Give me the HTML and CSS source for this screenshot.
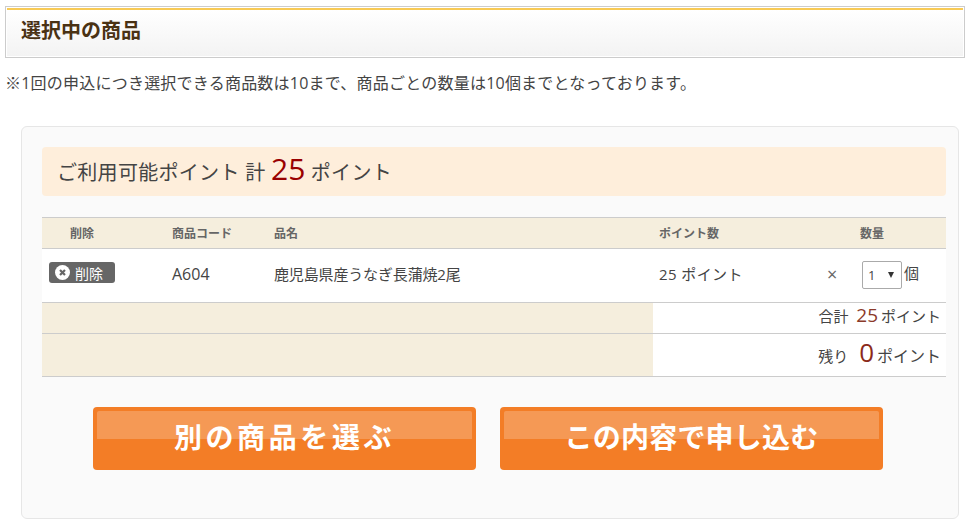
FILE: index.html
```html
<!DOCTYPE html>
<html lang="ja">
<head>
    <meta charset="UTF-8">
    <title>選択中の商品</title>
    <link rel="stylesheet" href="styles.css">
</head>
<body>
    <h2 class="heading"><span>選択中の商品</span></h2>
    <p class="note">※1回の申込につき選択できる商品数は10まで、商品ごとの数量は10個までとなっております。</p>

    <div class="panel">
        <div class="available">ご利用可能ポイント 計 <em>25</em> ポイント</div>

        <table class="items">
            <thead>
                <tr>
                    <th class="col-del">削除</th>
                    <th class="col-code">商品コード</th>
                    <th class="col-name">品名</th>
                    <th class="col-point">ポイント数</th>
                    <th class="col-times"></th>
                    <th class="col-qty">数量</th>
                </tr>
            </thead>
            <tbody>
                <tr class="item">
                    <td>
                        <a class="del-btn" href="#">
                            <svg width="15" height="15" viewBox="0 0 15 15">
                                <circle cx="7.5" cy="7.5" r="7.5" fill="#fff"/>
                                <path d="M5 5l5 5M10 5l-5 5" stroke="#666" stroke-width="2.2"/>
                            </svg>
                            削除
                        </a>
                    </td>
                    <td class="code-cell">A604</td>
                    <td class="name-cell">鹿児島県産うなぎ長蒲焼2尾</td>
                    <td class="point-cell">25 ポイント</td>
                    <td class="times-cell">×</td>
                    <td class="qty-cell">
                        <span class="qty-select">1<i></i></span><span class="qty-unit">個</span>
                    </td>
                </tr>
                <tr class="sum">
                    <td colspan="3" class="blank"></td>
                    <td colspan="3" class="sum-cell">合計 <b class="sum-num">25</b> ポイント</td>
                </tr>
                <tr class="sum rest">
                    <td colspan="3" class="blank"></td>
                    <td colspan="3" class="sum-cell">残り <b class="rest-num">0</b> <span class="rest-unit">ポイント</span></td>
                </tr>
            </tbody>
        </table>

        <div class="buttons">
            <a class="btn btn-wide" href="#">別の商品を選ぶ</a>
            <a class="btn btn-apply" href="#">この内容で申し込む</a>
        </div>
    </div>
</body>
</html>
```

FILE: styles.css
```css
* {
    box-sizing: border-box;
}
body {
    margin: 0;
    padding: 6px 5px 0;
    background-color: #fff;
    color: #444;
    font-family: "Open Sans", "Noto Sans CJK JP", sans-serif;
    font-size: 15px;
}
.heading {
    margin: 0;
    height: 52px;
    border: 1px solid #ccc;
    padding: 1px;
    font-size: 20px;
    color: #4a3214;
}
.heading span {
    display: block;
    height: 100%;
    padding: 5px 0 0 14px;
    border-top: 2px solid #f8ca55;
    background: linear-gradient(to bottom, #fff, #f3f3f3);
}
.note {
    margin: 14px 0 0;
    line-height: 22px;
    font-size: 16px;
    letter-spacing: 0.22px;
}
.panel {
    margin: 32px 6px 0 16px;
    height: 393px;
    padding: 20px 12px 0 20px;
    background-color: #fafafa;
    border: 1px solid #e6e6e6;
    border-radius: 6px;
}
.available {
    height: 49px;
    padding-left: 15px;
    line-height: 43px;
    font-size: 20px;
    letter-spacing: 0.3px;
    background-color: #feeedb;
    border-radius: 4px;
    white-space: nowrap;
}
.available em {
    font-style: normal;
    font-size: 30px;
    letter-spacing: 0;
    color: #990000;
}
.items {
    width: 904px;
    margin-top: 21px;
    border-collapse: collapse;
    table-layout: fixed;
}
.items th {
    height: 31px;
    padding: 0;
    background-color: #f5eedd;
    border-top: 1px solid #ccc;
    border-bottom: 1px solid #ccc;
    font-size: 12px;
    color: #666;
    text-align: left;
}
.items th.col-del {
    width: 130px;
    padding-left: 28px;
}
.items th.col-code {
    width: 102px;
}
.items th.col-name {
    width: 379px;
}
.items th.col-point {
    width: 174px;
    padding-left: 6px;
}
.items th.col-times {
    width: 33px;
}
.item td {
    height: 54px;
    background-color: #fff;
    border-bottom: 1px solid #ccc;
    padding: 0 0 5px;
    font-size: 15px;
}
.item td.code-cell {
    padding-bottom: 3px;
    font-size: 16px;
}
.item td.name-cell {
    letter-spacing: -0.15px;
}
.item td.point-cell {
    padding-left: 6px;
    letter-spacing: 0.4px;
}
.item td.times-cell {
    padding-bottom: 3px;
    font-size: 18px;
    color: #666;
}
.item td.qty-cell {
    padding-bottom: 2px;
}
.del-btn {
    display: inline-flex;
    align-items: center;
    gap: 5px;
    width: 66px;
    height: 21px;
    margin: 0 0 0 7px;
    padding-left: 6px;
    background-color: #666;
    border-radius: 3px;
    color: #fff;
    font-size: 14px;
    text-decoration: none;
}
.qty-select {
    display: inline-block;
    position: relative;
    width: 40px;
    height: 28px;
    margin-left: 2px;
    padding-left: 5px;
    line-height: 26px;
    font-size: 13px;
    vertical-align: middle;
    background-color: #fff;
    border: 1px solid #aaa;
    border-radius: 2px;
}
.qty-select i {
    position: absolute;
    top: 10px;
    right: 7px;
    border-top: 6px solid #333;
    border-left: 3px solid transparent;
    border-right: 3px solid transparent;
}
.qty-unit {
    margin-left: 2px;
}
.sum td {
    height: 31px;
    padding: 0;
    border-bottom: 1px solid #ccc;
}
.sum .blank {
    background-color: #f5eedd;
}
.sum td.sum-cell {
    padding: 0 5px 5px 0;
    background-color: #fff;
    text-align: right;
    font-size: 15px;
    line-height: 22px;
    white-space: nowrap;
}
.rest td {
    height: 43px;
}
.rest td.sum-cell {
    padding: 0 5px 3px 0;
}
.sum-num {
    margin: 0 -1px 0 4px;
    font-weight: normal;
    font-size: 19px;
    color: #8b3a2a;
}
.rest-num {
    margin: 0 -1px 0 7px;
    font-weight: normal;
    font-size: 26px;
    color: #8b2a1a;
}
.rest-unit {
    font-size: 16px;
}
.buttons {
    display: flex;
    gap: 24px;
    margin: 30px 0 0 51px;
}
.btn {
    position: relative;
    display: block;
    width: 383px;
    height: 63px;
    background-color: #f37d26;
    border-radius: 4px;
    color: #fff;
    font-size: 28px;
    font-weight: bold;
    line-height: 61px;
    text-align: center;
    text-decoration: none;
}
.btn::before {
    content: "";
    position: absolute;
    top: 4px;
    left: 4px;
    right: 4px;
    height: 28px;
    background-color: rgba(255, 255, 255, 0.22);
    border-radius: 2px 2px 0 0;
}
.btn-wide {
    letter-spacing: 3.6px;
}
.btn-apply {
    letter-spacing: 0.2px;
}
```
